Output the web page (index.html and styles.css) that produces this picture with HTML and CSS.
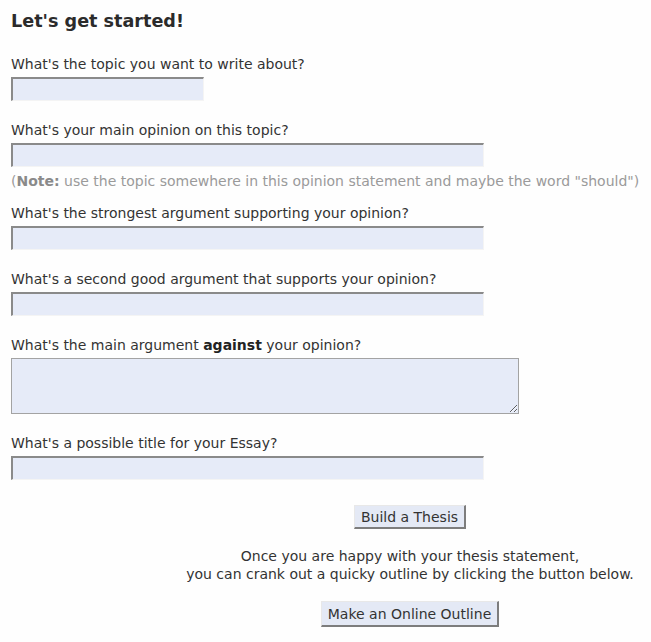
FILE: index.html
```html
<!DOCTYPE html>
<html>
<head>
<meta charset="utf-8">
<link rel="stylesheet" href="styles.css">
</head>
<body>
<h1 class="title">Let's get started!</h1>
<form class="form">
  <div class="field">
    <label class="label">What's the topic you want to write about?</label>
    <input class="inp inp-short" type="text">
  </div>
  <div class="field">
    <label class="label">What's your main opinion on this topic?</label>
    <input class="inp inp-long" type="text">
    <p class="note">(<b>Note:</b> use the topic somewhere in this opinion statement and maybe the word "should")</p>
  </div>
  <div class="field">
    <label class="label">What's the strongest argument supporting your opinion?</label>
    <input class="inp inp-long" type="text">
  </div>
  <div class="field">
    <label class="label">What's a second good argument that supports your opinion?</label>
    <input class="inp inp-long" type="text">
  </div>
  <div class="field">
    <label class="label">What's the main argument <b>against</b> your opinion?</label>
    <textarea class="area"></textarea>
  </div>
  <div class="field">
    <label class="label">What's a possible title for your Essay?</label>
    <input class="inp inp-long" type="text">
  </div>
  <div class="actions">
    <button type="button" class="btn">Build a Thesis</button>
    <p class="info">Once you are happy with your thesis statement,<br>you can crank out a quicky outline by clicking the button below.</p>
    <button type="button" class="btn btn-tall">Make an Online Outline</button>
  </div>
</form>
</body>
</html>
```

FILE: styles.css
```css
html, body {
  margin: 0;
  background: #fefefe;
}
body {
  padding: 0 11px;
  font-family: "DejaVu Sans", Verdana, sans-serif;
  font-size: 14px;
  color: #333;
}
.title {
  margin: 0;
  padding-top: 11px;
  font-size: 17.6px;
  font-weight: bold;
  line-height: 20px;
  color: #2b2b2b;
}
.form {
  margin: 0;
  padding-top: 25px;
}
.field {
  display: flex;
  flex-direction: column;
  align-items: flex-start;
  margin-bottom: 21px;
}
.label {
  display: block;
  line-height: 17px;
  height: 17px;
  margin-bottom: 4px;
}
.label b {
  color: #222;
}
.inp {
  box-sizing: border-box;
  height: 24px;
  margin: 0;
  padding: 2px 4px;
  background: #e6ebf8;
  border-style: solid;
  border-width: 2px 1px 1px 2px;
  border-color: #8a8a8a #f4f4f4 #f4f4f4 #8a8a8a;
  font: inherit;
}
.inp-short { width: 193px; }
.inp-long { width: 473px; }
.note {
  margin: 6px 0 -6px;
  font-size: 14px;
  line-height: 17px;
  color: #9a9a9a;
  white-space: nowrap;
}
.note b {
  color: #8a8a8a;
}
.area {
  box-sizing: border-box;
  width: 508px;
  height: 56px;
  margin: 0;
  background: #e6ebf8;
  border: 1px solid #a3a3a3;
  font: inherit;
  display: block;
}
.actions {
  display: flex;
  flex-direction: column;
  align-items: center;
  padding-left: 169px;
  padding-top: 4px;
  text-align: center;
}
.btn {
  box-sizing: border-box;
  height: 24px;
  margin: 0;
  padding: 0 6px;
  background: #e4e9f5;
  border-style: solid;
  border-width: 1px 2px 2px 1px;
  border-color: #e8e8e8 #7d7d7d #7d7d7d #e8e8e8;
  font-family: "DejaVu Sans", sans-serif;
  font-size: 14px;
  color: #333;
}
.btn-tall {
  height: 26px;
}
.info {
  margin: 18px 0 18px;
  line-height: 18px;
}
```
